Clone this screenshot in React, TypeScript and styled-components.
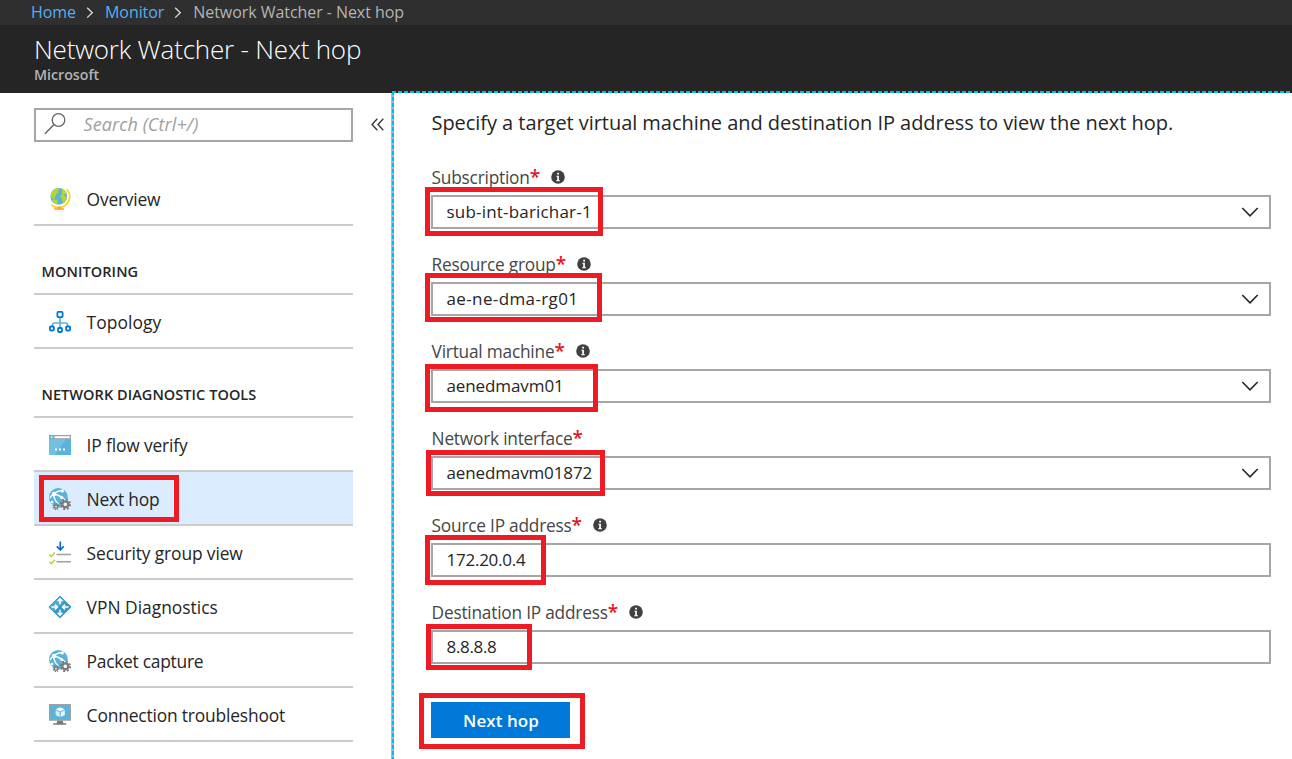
import React from 'react';
import styled, { createGlobalStyle } from 'styled-components';

const GlobalStyle = createGlobalStyle`
  * { box-sizing: border-box; }
  body {
    margin: 0;
    background: #fff;
    color: #252525;
    font-family: "Open Sans", "Noto Sans", sans-serif;
    overflow: hidden;
  }
`;

const Page = styled.div`
  display: flex;
  flex-direction: column;
  height: 759px;
  overflow: hidden;
`;

const Breadcrumbs = styled.nav`
  display: flex;
  align-items: flex-start;
  flex: none;
  height: 25px;
  padding-left: 31px;
  background: #2f2f2f;
  font-size: 16px;
  line-height: 24px;
  letter-spacing: -0.06px;
  color: #b4b4b4;
  white-space: nowrap;
`;

const CrumbLink = styled.a`
  color: #55aef5;
`;

const CrumbArrow = styled.svg`
  width: 8px;
  height: 12px;
  margin: 7px 11px 0 10px;
`;

const Header = styled.header`
  flex: none;
  height: 68px;
  padding: 8px 0 0 34px;
  background: #252525;
`;

const Title = styled.h1`
  margin: 0;
  font-size: 26px;
  font-weight: 300;
  line-height: 32px;
  letter-spacing: -0.2px;
  color: #fff;
`;

const Subtitle = styled.div`
  font-size: 14.2px;
  font-weight: 600;
  line-height: 19px;
  color: #b4b4b4;
`;

const Body = styled.div`
  display: flex;
  flex: 1;
`;

const Sidebar = styled.aside`
  width: 391px;
  flex: none;
  padding: 15px 7px 0 34px;
`;

const SearchRow = styled.div`
  display: flex;
  align-items: center;
  justify-content: space-between;
  margin-bottom: 30px;
`;

const SearchBox = styled.div`
  display: flex;
  align-items: center;
  width: 319px;
  height: 34px;
  padding: 0 0 2px 8px;
  border: 2px solid #a6a6a6;
  font-size: 18px;
  font-style: italic;
  line-height: 24px;
  letter-spacing: 0.09px;
  color: #a0a0a0;
`;

const SearchIcon = styled.svg`
  width: 22px;
  height: 22px;
  margin-right: 17.5px;
`;

const CollapseIcon = styled.svg`
  width: 13px;
  height: 13px;
  margin-bottom: 2px;
`;

const NavRow = styled.div<{ $active?: boolean }>`
  position: relative;
  display: flex;
  align-items: center;
  width: 319px;
  height: 54px;
  padding: 2px 0 0 15px;
  border-bottom: 2px solid #ccc;
  background: ${(p) => (p.$active ? '#daecfe' : 'transparent')};
`;

const NavIcon = styled.svg`
  width: 22px;
  height: 22px;
  margin-right: 15.6px;
  flex: none;
  overflow: visible;
`;

const NavText = styled.span<{ $track: number }>`
  font-size: 17.4px;
  line-height: 24px;
  letter-spacing: ${(p) => p.$track}px;
  white-space: nowrap;
`;

const NavHeading = styled.h2<{ $track: number }>`
  width: 319px;
  height: 69px;
  margin: 0;
  padding: 37px 0 0 7.5px;
  border-bottom: 2px solid #ccc;
  font-size: 14.5px;
  font-weight: 600;
  line-height: 18px;
  letter-spacing: ${(p) => p.$track}px;
  white-space: nowrap;
`;

const Panel = styled.main`
  display: grid;
  grid-template-columns: 1px 2px 1fr;
  grid-template-rows: 2px 1fr;
  flex: 1;
  margin-top: -2px;
`;

const TopEdge = styled.div`
  grid-column: 2 / 4;
  grid-row: 1;
  background: repeating-linear-gradient(90deg, #00bcf2 0 4px, #252525 4px 6px);
`;

const GreyEdge = styled.div`
  grid-column: 1;
  grid-row: 2;
  background: #b4b4b4;
`;

const LeftEdge = styled.div`
  grid-column: 2;
  grid-row: 2;
  background: repeating-linear-gradient(180deg, #00bcf2 0 2px, #b4b4b4 2px 4px, #00bcf2 4px 6px);
`;

const Form = styled.div`
  grid-column: 3;
  grid-row: 2;
  padding: 16px 21px 0 37px;
`;

const Intro = styled.p`
  margin: 0 0 29px;
  padding-left: 0.5px;
  font-size: 20px;
  line-height: 28px;
  letter-spacing: -0.05px;
  white-space: nowrap;
`;

const Field = styled.div`
  position: relative;
  margin-bottom: 24px;
`;

const FieldLabel = styled.div`
  display: flex;
  height: 29px;
  padding-left: 0.6px;
  font-size: 17.3px;
  line-height: 24px;
  letter-spacing: -0.22px;
  color: #464646;
  white-space: nowrap;
`;

const Required = styled.span`
  margin-top: -1px;
  font-size: 19px;
  font-weight: 600;
  letter-spacing: 0;
  color: #e81123;
`;

const InfoIcon = styled.svg`
  width: 14px;
  height: 14px;
  margin: 4px 0 0 11px;
`;

const Input = styled.div<{ $track: number }>`
  display: flex;
  align-items: center;
  justify-content: space-between;
  height: 34px;
  padding: 0 10px 0 13.5px;
  border: 2px solid #a6a6a6;
  font-size: 17px;
  line-height: 24px;
  letter-spacing: ${(p) => p.$track}px;
`;

const Chevron = styled.svg`
  width: 18px;
  height: 12px;
`;

const Actions = styled.div`
  position: relative;
  width: 139px;
  margin-top: 38px;
`;

const PrimaryButton = styled.button`
  display: block;
  width: 139px;
  height: 36px;
  padding: 1px 0 0 1px;
  border: 0;
  background: #0078d7;
  color: #fff;
  font: 600 17px/35px "Open Sans", "Noto Sans", sans-serif;
  letter-spacing: 0.05px;
`;

const Highlight = styled.div<{ $x: number; $y: number; $w: number; $h: number }>`
  position: absolute;
  left: ${(p) => p.$x}px;
  top: ${(p) => p.$y}px;
  width: ${(p) => p.$w}px;
  height: ${(p) => p.$h}px;
  border: 5px solid #ed1c24;
`;

const Globe = () => (
  <NavIcon viewBox="0 0 22 22">
    <path d="M17.6 1.2A10.3 10.3 0 0 1 17.5 16A10.3 10.3 0 0 1 2.5 16.8" fill="none" stroke="#fcd116" strokeWidth="1.6" />
    <path d="M9 18.4h2.4v1.8H15v1.6H5.2v-1.6H9z" fill="#fba21b" />
    <circle cx="9.8" cy="8.4" r="8.4" fill="#59b4d9" />
    <path d="M2 5.2C3.4 2 6 .4 9 .1l1.5 1.7-1.7 1.4 1.1 1.3-2.3 1.2-.8 2.6-2 .4 1.500 1.800-1.200 1.200L1.400 8.500z" fill="#b8d432" />
    <path d="M3 12.800l2.500-1.200 2.600.6.8 1.700-1 2.400C5.800 15.800 4.200 14.600 3 12.800z" fill="#b8d432" />
    <path d="M12.2.6c2.6.7 4.7 2.5 5.6 5.2l-1.9.3-1.1 1.6 2.3.9.7 1.3c-.5 2.3-1.6 4-3.3 5.2l-1.500-1.900.6-2-2.100-1.700.5-2.900 2-.7-1.600-1.200.9-1.700z" fill="#b8d432" />
  </NavIcon>
);

const Topology = () => (
  <NavIcon viewBox="0 0 22 22">
    <path d="M11 5v12M3.5 15.5v-1.2q0-2.300 2.300-2.300h10.400q2.300 0 2.300 2.300v1.200" fill="none" stroke="#59b4d9" strokeWidth="1.7" />
    <g fill="#fff" stroke="#0078d7" strokeWidth="1.8">
      <rect x="8.400" y=".9" width="5.200" height="5.200" rx=".8" />
      <rect x=".9" y="15.500" width="4" height="4" rx=".9" />
      <rect x="9" y="17" width="4" height="4" rx=".9" />
      <rect x="17.100" y="15.500" width="4" height="4" rx=".9" />
    </g>
  </NavIcon>
);

const FlowWindow = () => (
  <NavIcon viewBox="0 0 22 22">
    <path d="M0 1h22v20H0z" fill="#59b4d9" />
    <path d="M0 21V5h17.5L5.5 21z" fill="#72c0df" />
    <path d="M0 1h22v4.300H0z" fill="#a0a1a2" />
    <path d="M5.5 2.200h15.300v2H5.500z" fill="#fff" />
    <circle cx="2.900" cy="3.200" r="2" fill="#59b4d9" />
    <path d="M4 3.200H2M2.900 2.300L2 3.200l.9.900" fill="none" stroke="#fff" strokeWidth=".7" />
    <path d="M6 14.600h2v2H6zm4 0h2v2h-2zm4 0h2v2h-2z" fill="#fff" />
  </NavIcon>
);

const NetworkGears = () => (
  <NavIcon viewBox="0 0 22 22">
    <circle cx="9.400" cy="9.400" r="9.400" fill="#59b4d9" />
    <g fill="none" stroke="#fff" strokeWidth="1.400">
      <path d="M5 6C7 3.800 10 2.500 14.500 2.500M4.500 6.500C5 10.500 6.500 13.500 9.500 16M5.500 6C9.500 7 13 9 17 13M1 10C2 8 3 7 4.500 6" />
    </g>
    <g fill="#fff">
      <circle cx="5" cy="6" r="2.200" />
      <circle cx="13.300" cy="2.900" r="1.600" />
      <circle cx="3" cy="14" r="1.300" />
      <circle cx="12.500" cy="9.200" r="1.500" />
    </g>
    <circle cx="16.300" cy="16.300" r="4.700" fill="none" stroke="#7a7a7a" strokeWidth="2" strokeDasharray="1.900 1.790" />
    <circle cx="16.300" cy="16.300" r="2.900" fill="none" stroke="#7a7a7a" strokeWidth="2.400" />
    <circle cx="16.300" cy="16.300" r="1.700" fill="#f2f5f8" />
    <circle cx="7" cy="18.600" r="2.900" fill="none" stroke="#7a7a7a" strokeWidth="1.300" strokeDasharray="1.200 1.078" />
    <circle cx="7" cy="18.600" r="1.700" fill="#f2f5f8" stroke="#7a7a7a" strokeWidth="1.500" />
  </NavIcon>
);

const Checklist = () => (
  <NavIcon viewBox="0 0 22 22">
    <path d="M11.300-.5v8M7.800 4.300l3.500 3.500 3.500-3.500" fill="none" stroke="#0072c6" strokeWidth="1.700" />
    <path d="M7.500 12.500H22M7.500 19.700H22" stroke="#a0a1a2" strokeWidth="1.500" />
    <path d="M.5 12.600l1.900 1.900 3.500-3.900M.5 19.700l1.900 1.900 3.500-3.900" fill="none" stroke="#b8d432" strokeWidth="1.500" />
  </NavIcon>
);

const VpnDiamond = () => (
  <NavIcon viewBox="0 0 22 22">
    <path d="M11 .4L21.600 11 11 21.600.4 11z" fill="#3999c6" stroke="#3999c6" strokeWidth="1.400" strokeLinejoin="round" />
    <path d="M11 .4L.4 11 5 15.600 15.600 5z" fill="#55a9d1" />
    <g fill="none" stroke="#fff" strokeWidth="1.500">
      <path d="M11 8.300V3.500M8.600 5.300L11 2.900l2.400 2.400M11 13.700v4.800M8.600 16.700l2.400 2.400 2.400-2.400" />
      <path d="M2.500 11h5.200M6 8.600L8.400 11 6 13.400M19.500 11h-5.200M16 8.600L13.600 11l2.400 2.400" />
    </g>
  </NavIcon>
);

const MonitorCube = () => (
  <NavIcon viewBox="0 0 22 22">
    <path d="M0 0h22v16.800H0z" fill="#a0a1a2" />
    <path d="M1.300 1.300h19.400v14.200H1.300z" fill="#59b4d9" />
    <path d="M8.200 16.800h5.600l.6 2.400h2.800v1.600H4.200v-1.600h3.400z" fill="#7a7a7a" />
    <path d="M11.200 3.200l4.400 2.100-4.400 2.200-4.400-2.200z" fill="#fff" />
    <path d="M6.600 6.200l4.100 2v4.900l-4.100-2.100z" fill="#d6edf6" />
    <path d="M15.800 6.200l-4.100 2v4.900l4.100-2.100z" fill="#eef8fb" />
  </NavIcon>
);

const Arrow = () => (
  <CrumbArrow viewBox="0 0 8 12">
    <path d="M1.200.8L6.300 5.700 1.200 10.600" fill="none" stroke="#e0e0e0" strokeWidth="1.300" />
  </CrumbArrow>
);

const Info = () => (
  <InfoIcon viewBox="0 0 14 14">
    <circle cx="7" cy="7" r="6.800" fill="#404040" />
    <path d="M5.400 5.700h2.500v4.600h1v1H5.200v-1h1V6.700h-.8zM6.200 2.700h1.800v1.800H6.200z" fill="#fff" />
  </InfoIcon>
);

type Item = { text: string; track: number; Icon: React.FC; active?: boolean };

const tools: Item[] = [
  { text: 'IP flow verify', track: -0.15, Icon: FlowWindow },
  { text: 'Next hop', track: -0.21, Icon: NetworkGears, active: true },
  { text: 'Security group view', track: -0.12, Icon: Checklist },
  { text: 'VPN Diagnostics', track: 0, Icon: VpnDiamond },
  { text: 'Packet capture', track: -0.27, Icon: NetworkGears },
  { text: 'Connection troubleshoot', track: -0.17, Icon: MonitorCube },
];

const NavItem = ({ text, track, Icon, active }: Item) => (
  <NavRow $active={active}>
    <Icon />
    <NavText $track={track}>{text}</NavText>
    {active && <Highlight $x={5} $y={3} $w={140} $h={47} />}
  </NavRow>
);

type FieldData = {
  label: string;
  value: string;
  track: number;
  info?: boolean;
  select?: boolean;
  mark: [number, number, number, number];
};

const fields: FieldData[] = [
  { label: 'Subscription', value: 'sub-int-barichar-1', track: 0.19, info: true, select: true, mark: [-6, 21, 178, 49] },
  { label: 'Resource group', value: 'ae-ne-dma-rg01', track: 0.38, info: true, select: true, mark: [-6, 20, 177, 49] },
  { label: 'Virtual machine', value: 'aenedmavm01', track: -0.1, info: true, select: true, mark: [-6, 24, 173, 48] },
  { label: 'Network interface', value: 'aenedmavm01872', track: -0.13, select: true, mark: [-5, 23, 179, 46] },
  { label: 'Source IP address', value: '172.20.0.4', track: -0.25, info: true, mark: [-6, 21, 121, 50] },
  { label: 'Destination IP address', value: '8.8.8.8', track: -0.34, info: true, mark: [-5, 23, 106, 46] },
];

export default function App() {
  return (
    <Page>
      <GlobalStyle />
      <Breadcrumbs>
        <CrumbLink>Home</CrumbLink>
        <Arrow />
        <CrumbLink>Monitor</CrumbLink>
        <Arrow />
        <span>Network Watcher - Next hop</span>
      </Breadcrumbs>
      <Header>
        <Title>Network Watcher - Next hop</Title>
        <Subtitle>Microsoft</Subtitle>
      </Header>
      <Body>
        <Sidebar>
          <SearchRow>
            <SearchBox>
              <SearchIcon viewBox="0 0 22 22">
                <circle cx="14.500" cy="7" r="6.300" fill="none" stroke="#666" strokeWidth="1.300" />
                <path d="M10 11.500L1 20.700" stroke="#666" strokeWidth="1.500" />
              </SearchIcon>
              Search (Ctrl+/)
            </SearchBox>
            <CollapseIcon viewBox="0 0 13 13">
              <path d="M6.300.8L1 6.500l5.300 5.700M12.300.8L7 6.500l5.300 5.700" fill="none" stroke="#333" strokeWidth="1.300" />
            </CollapseIcon>
          </SearchRow>
          <NavItem text="Overview" track={-0.21} Icon={Globe} />
          <NavHeading $track={0.1}>MONITORING</NavHeading>
          <NavItem text="Topology" track={0.08} Icon={Topology} />
          <NavHeading $track={0.06}>NETWORK DIAGNOSTIC TOOLS</NavHeading>
          {tools.map((t) => (
            <NavItem key={t.text} {...t} />
          ))}
        </Sidebar>
        <Panel>
          <TopEdge />
          <GreyEdge />
          <LeftEdge />
          <Form>
            <Intro>Specify a target virtual machine and destination IP address to view the next hop.</Intro>
            {fields.map((f) => (
              <Field key={f.label}>
                <FieldLabel>
                  {f.label}
                  <Required>*</Required>
                  {f.info && <Info />}
                </FieldLabel>
                <Input $track={f.track}>
                  {f.value}
                  {f.select && (
                    <Chevron viewBox="0 0 18 12">
                      <path d="M1.300 2l7.700 7.800L16.700 2" fill="none" stroke="#252525" strokeWidth="1.600" />
                    </Chevron>
                  )}
                </Input>
                <Highlight $x={f.mark[0]} $y={f.mark[1]} $w={f.mark[2]} $h={f.mark[3]} />
              </Field>
            ))}
            <Actions>
              <PrimaryButton>Next hop</PrimaryButton>
              <Highlight $x={-12} $y={-9} $w={166} $h={56} />
            </Actions>
          </Form>
        </Panel>
      </Body>
    </Page>
  );
}
